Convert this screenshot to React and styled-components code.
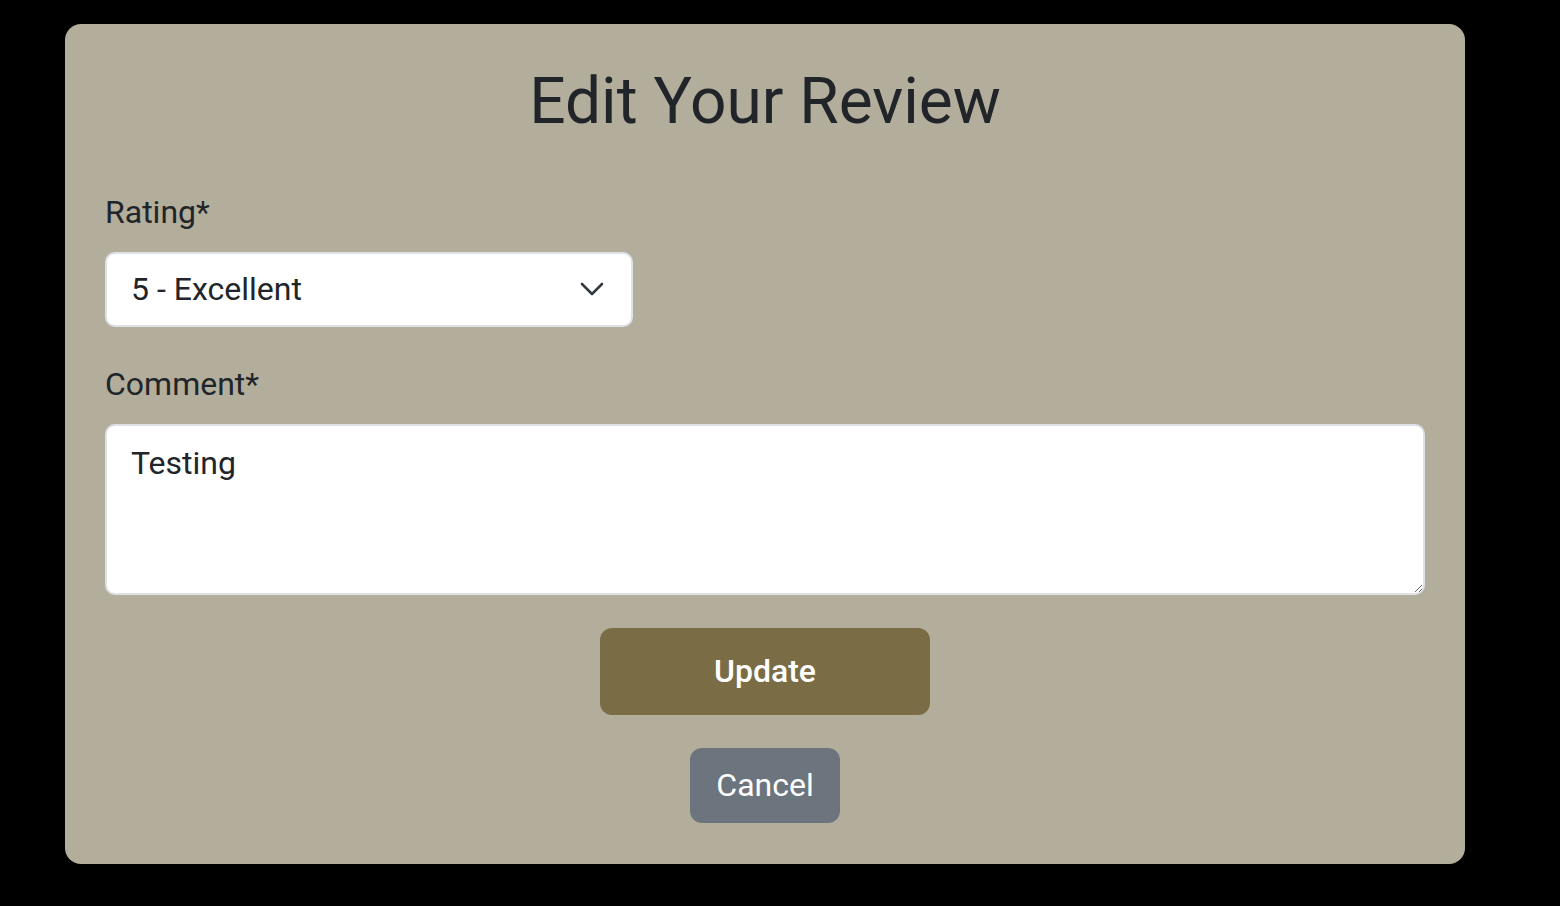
import React, { useState } from "react";
import styled, { createGlobalStyle } from "styled-components";

const GlobalStyle = createGlobalStyle`
  html, body {
    margin: 0;
    background: #000;
  }
  body {
    font-family: Roboto, "Liberation Sans", sans-serif;
    color: #212529;
  }
`;

const Page = styled.div`
  min-height: 906px;
  box-sizing: border-box;
  padding: 24px 0 0 65px;
`;

const Card = styled.form`
  width: 1400px;
  box-sizing: border-box;
  background: #b3ad9c;
  border-radius: 16px;
  padding: 40px 40px 41px;
  display: flex;
  flex-direction: column;
`;

const Title = styled.h1`
  margin: 0 0 47px;
  font-size: 64px;
  font-weight: 400;
  line-height: 1.2;
  text-align: center;
`;

const Field = styled.div`
  display: flex;
  flex-direction: column;
  margin-bottom: 33px;
`;

const Label = styled.label`
  font-size: 32px;
  line-height: 48px;
  margin-bottom: 16px;
`;

const SelectWrap = styled.div`
  position: relative;
  width: 528px;
`;

const Select = styled.select`
  appearance: none;
  width: 100%;
  height: 75px;
  box-sizing: border-box;
  padding: 0 60px 0 24px;
  font: inherit;
  font-size: 32px;
  color: #212529;
  background: #fff;
  border: 2px solid #dee2e6;
  border-radius: 10px;
  outline: none;
`;

const Chevron = styled.svg`
  position: absolute;
  right: 29px;
  top: 50%;
  transform: translateY(-50%);
  pointer-events: none;
`;

const TextArea = styled.textarea`
  width: 100%;
  height: 171px;
  box-sizing: border-box;
  padding: 13px 24px;
  font: inherit;
  font-size: 32px;
  line-height: 48px;
  color: #212529;
  background: #fff;
  border: 2px solid #dee2e6;
  border-radius: 10px;
  outline: none;
  resize: vertical;
`;

const Actions = styled.div`
  display: flex;
  flex-direction: column;
  align-items: center;
  gap: 33px;
`;

const Button = styled.button`
  border: none;
  color: #fff;
  font-family: inherit;
  font-size: 32px;
  font-weight: ${(p) => (p.$primary ? 500 : 400)};
  width: ${(p) => (p.$primary ? 330 : 150)}px;
  height: ${(p) => (p.$primary ? 87 : 75)}px;
  border-radius: 12px;
  background: ${(p) => (p.$primary ? "#7a6d46" : "#6c757d")};
  cursor: pointer;
`;

export default function App() {
  const [rating, setRating] = useState("5");
  const [comment, setComment] = useState("Testing");

  return (
    <Page>
      <GlobalStyle />
      <Card onSubmit={(e) => e.preventDefault()}>
        <Title>Edit Your Review</Title>
        <Field>
          <Label htmlFor="rating">Rating*</Label>
          <SelectWrap>
            <Select id="rating" value={rating} onChange={(e) => setRating(e.target.value)}>
              <option value="5">5 - Excellent</option>
              <option value="4">4 - Very Good</option>
              <option value="3">3 - Good</option>
              <option value="2">2 - Fair</option>
              <option value="1">1 - Poor</option>
            </Select>
            <Chevron width="24" height="14" viewBox="0 0 24 14" fill="none">
              <path d="M2 2l10 10 10-10" stroke="#343a40" strokeWidth="2.6" strokeLinecap="round" strokeLinejoin="round" />
            </Chevron>
          </SelectWrap>
        </Field>
        <Field>
          <Label htmlFor="comment">Comment*</Label>
          <TextArea id="comment" value={comment} onChange={(e) => setComment(e.target.value)} />
        </Field>
        <Actions>
          <Button type="submit" $primary>Update</Button>
          <Button type="button">Cancel</Button>
        </Actions>
      </Card>
    </Page>
  );
}
